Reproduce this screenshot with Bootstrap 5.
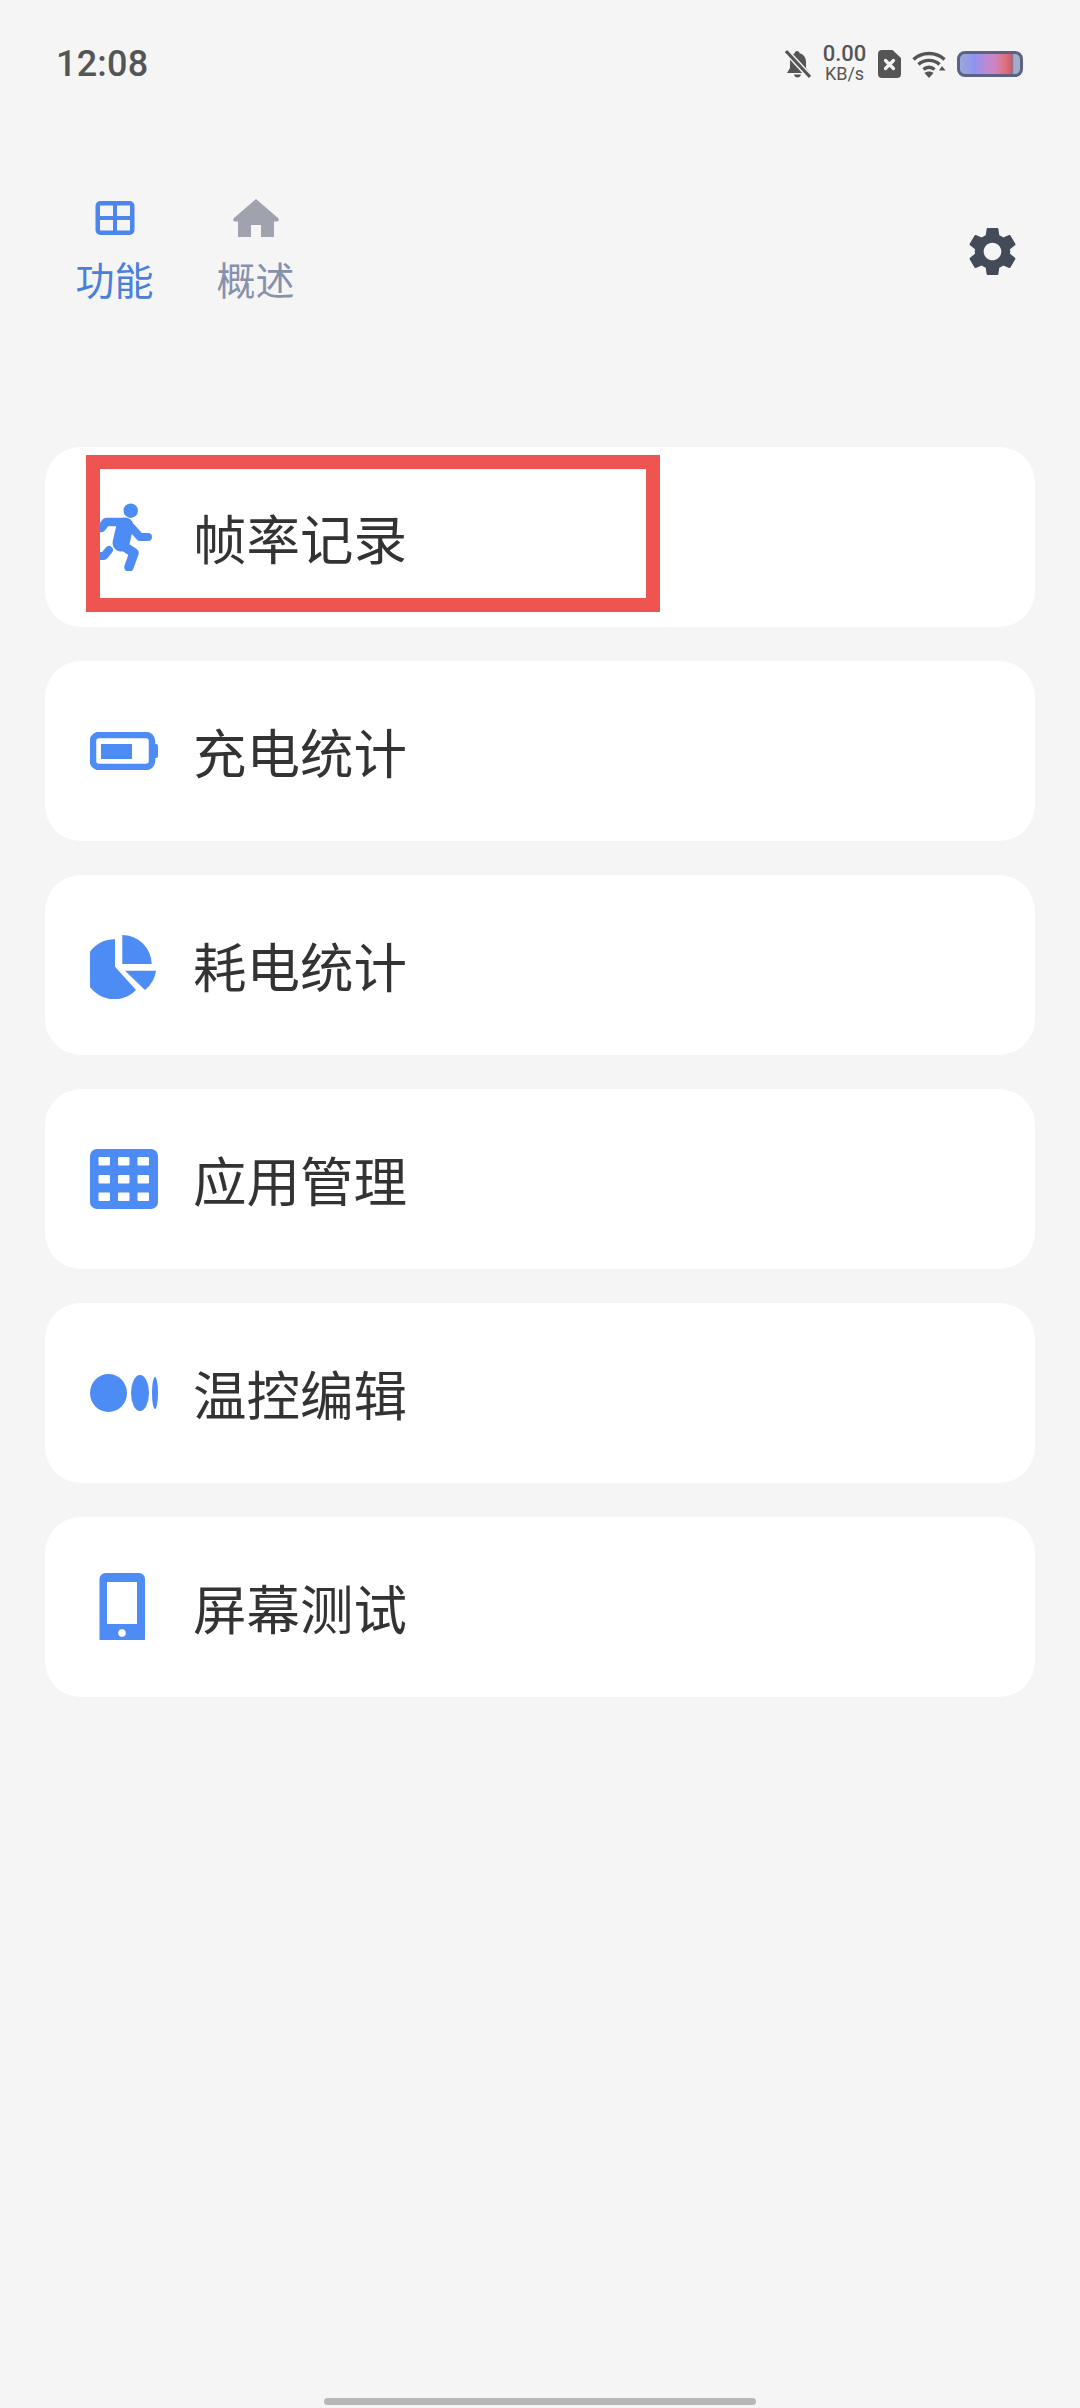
<!DOCTYPE html>
<html lang="zh-CN">
<head>
<meta charset="utf-8">
<title>功能</title>
<link href="https://cdn.jsdelivr.net/npm/bootstrap@5.3.0/dist/css/bootstrap.min.css" rel="stylesheet">
<style>
html, body { background: #f5f5f6; }
body { font-family: "Noto Sans CJK SC", "Noto Sans", sans-serif; }
svg { display: block; flex: none; }
.page-shell { min-height: 2408px; overflow: hidden; }
.status-row { padding: 44px 57px 0 56px; height: 84px; color: #555; }
.clock { font-family: Roboto, sans-serif; font-weight: 500; font-size: 36px; line-height: 40px; letter-spacing: .2px; }
.status-icons { gap: 11px; }
.speed { font-family: Roboto, sans-serif; font-weight: 500; width: 45px; margin-top: -3px; }
.speed-num { font-size: 22px; line-height: 22px; }
.speed-unit { font-size: 18px; line-height: 18px; font-weight: 400; }
.batt-pill { width: 66px; height: 26px; border: 3px solid #5b6283; border-radius: 8px; background: linear-gradient(90deg, #9aa9dd 0%, #8f93ee 24%, #b98bd6 42%, #cc85c4 58%, #e0727f 74%, #d0606e 84%, #8f6f88 87%, #a5adc6 90%, #a5adc6 100%); }
.tabs-row { margin-top: 115px; padding: 0 58px 0 76px; }
.tab-group { gap: 64px; }
.tab-item { width: 77px; }
.tab-icon { height: 38px; }
.tab-label { margin-top: 21px; font-size: 39px; line-height: 40px; white-space: nowrap; }
.tab-on { color: #4a80dc; }
.tab-off { color: #8791ad; }
.gear-wrap { margin-top: 5px; }
.feature-list { margin: 149px 45px 0 45px; gap: 34px; }
.feature-card { height: 180px; border-radius: 36px; padding-left: 45px; background: #fff; }
.feature-glyph { width: 68px; }
.feature-name { margin-left: 35px; font-size: 53.5px; line-height: 60px; color: #333; }
.note-box { left: 41px; top: 8px; width: 574px; height: 157px; border: 14px solid #ef5550; }
.home-bar { width: 432px; height: 7px; border-radius: 4px; background: #b7b7b7; margin-bottom: 3px; }
</style>
</head>
<body>
<div class="page-shell d-flex flex-column">

  <div class="status-row d-flex justify-content-between align-items-center">
    <div class="clock">12:08</div>
    <div class="status-icons d-flex align-items-center">
      <svg width="26" height="28" viewBox="0 0 26 28"><path fill="#555" d="M12 1c1.500 0 2.500 1 2.600 2.300C19 4.400 21 8 21 12v6l4 5H2l3-5v-6c0-4 2.500-7.600 4.600-8.700C9.700 2 10.600 1 12 1zM9 24.500h7c-.4 1.800-1.800 3-3.500 3S9.400 26.300 9 24.500z"/><path d="M1 1l24 26" stroke="#f5f5f6" stroke-width="6"/><path d="M1 1l24 26" stroke="#555" stroke-width="3"/></svg>
      <div class="speed text-center">
        <div class="speed-num">0.00</div>
        <div class="speed-unit">KB/s</div>
      </div>
      <svg width="23" height="28" viewBox="0 0 23 28"><path fill="#555" d="M4 0h10.500L23 8v16a4 4 0 0 1-4 4H4a4 4 0 0 1-4-4V4a4 4 0 0 1 4-4z"/><path d="M7.500 10.500l8 8M15.500 10.500l-8 8" stroke="#f5f5f6" stroke-width="3.200" stroke-linecap="round"/></svg>
      <svg width="34" height="27" viewBox="0 0 34 27" fill="none" stroke="#555" stroke-width="3.400"><path d="M1.500 8.500C9.500 .5 24.500 .5 32.500 8.500"/><path d="M6.500 13.500C12 8 22 8 27.500 13.500"/><path d="M11.500 18.500C14.500 15.500 19.500 15.500 22.500 18.500"/><path fill="#555" stroke="none" d="M17 27l-4.500-5c2.500-2 6.500-2 9 0z"/><path fill="#555" stroke="none" d="M27 19.500l3-4.500 3.500 4.500z"/></svg>
      <div class="batt-pill"></div>
    </div>
  </div>

  <div class="tabs-row d-flex justify-content-between align-items-center">
    <div class="tab-group d-flex">
      <div class="tab-item d-flex flex-column align-items-center">
        <svg class="tab-icon" width="40" height="38" viewBox="0 0 40 38"><rect x="0.500" y="2" width="39" height="34" rx="5" fill="#4d85ee"/><g fill="#f5f5f6"><rect x="5" y="6.500" width="13" height="10.500"/><rect x="22" y="6.500" width="13" height="10.500"/><rect x="5" y="21" width="13" height="10.500"/><rect x="22" y="21" width="13" height="10.500"/></g></svg>
        <div class="tab-label tab-on">功能</div>
      </div>
      <div class="tab-item d-flex flex-column align-items-center">
        <svg class="tab-icon" width="46" height="38" viewBox="0 0 46 38"><path fill="#a0a3ad" d="M23 0l22 19c1.500 1.500.8 3.500-1 3.500h-3V38H28V26H18v12H5V22.500H2c-1.800 0-2.500-2-1-3.500z"/></svg>
        <div class="tab-label tab-off">概述</div>
      </div>
    </div>
    <div class="gear-wrap">
      <svg width="59" height="59" viewBox="0 0 24 24"><path fill="#434b58" d="M19.140 12.940c.04-.3.06-.61.06-.94 0-.32-.02-.64-.07-.94l2.030-1.580a.49.49 0 0 0 .12-.61l-1.920-3.320a.488.488 0 0 0-.59-.22l-2.390.96c-.5-.38-1.030-.7-1.620-.94l-.36-2.540a.484.484 0 0 0-.48-.41h-3.840c-.24 0-.43.17-.47.41l-.36 2.540c-.59.24-1.130.57-1.620.94l-2.390-.96c-.22-.08-.47 0-.59.22L2.740 8.870c-.12.21-.08.47.12.61l2.030 1.580c-.05.3-.09.63-.09.94s.02.64.07.94l-2.030 1.580a.49.49 0 0 0-.12.61l1.920 3.320c.12.22.37.29.59.22l2.390-.96c.5.38 1.030.7 1.620.94l.36 2.540c.05.24.24.41.48.41h3.840c.24 0 .44-.17.47-.41l.36-2.540c.59-.24 1.130-.56 1.620-.94l2.390.96c.22.08.47 0 .59-.22l1.920-3.320c.12-.22.07-.47-.12-.61l-2.010-1.580zM12 15.600c-1.980 0-3.600-1.620-3.600-3.600s1.620-3.600 3.600-3.600 3.600 1.620 3.600 3.600-1.620 3.600-3.600 3.600z"/></svg>
    </div>
  </div>

  <div class="feature-list d-flex flex-column">
    <div class="card border-0 feature-card flex-row align-items-center position-relative">
      <svg class="feature-glyph" width="68" height="68" viewBox="0 0 68 68" fill="none" stroke="#4d8bf5" stroke-linecap="round" stroke-linejoin="round">
        <circle cx="40.700" cy="7.700" r="7.200" fill="#4d8bf5" stroke="none"/>
        <path d="M35 23L31 40" stroke-width="17"/>
        <path d="M32 19H16L11.500 25" stroke-width="8.500"/>
        <path d="M41 24L50 34H58" stroke-width="8"/>
        <path d="M29 40L44 50L39 64" stroke-width="9.500"/>
        <path d="M0 53H14L19 47" stroke-width="8"/>
      </svg>
      <div class="feature-name">帧率记录</div>
      <div class="note-box position-absolute"></div>
    </div>
    <div class="card border-0 feature-card flex-row align-items-center">
      <svg class="feature-glyph" width="68" height="38" viewBox="0 0 68 38"><rect x="3" y="3" width="59" height="32" rx="6" fill="none" stroke="#4d8bf5" stroke-width="6.500"/><rect x="11" y="12" width="31" height="15" fill="#4d8bf5"/><path d="M65 12h1a2 2 0 0 1 2 2v10a2 2 0 0 1-2 2h-1z" fill="#4d8bf5"/></svg>
      <div class="feature-name">充电统计</div>
    </div>
    <div class="card border-0 feature-card flex-row align-items-center">
      <svg class="feature-glyph" width="68" height="68" viewBox="0 0 68 68" fill="#4d8bf5"><path d="M25 8.300V35.700L46 59A30 30 0 1 1 25 8.300z"/><path d="M32.300 4A29.500 29.500 0 0 1 61.700 33H32.300z"/><path d="M35 39.700H66A30 30 0 0 1 55 59z"/></svg>
      <div class="feature-name">耗电统计</div>
    </div>
    <div class="card border-0 feature-card flex-row align-items-center">
      <svg class="feature-glyph" width="68" height="60" viewBox="0 0 68 60"><rect width="68" height="60" rx="7" fill="#4d8bf5"/><g fill="#fff"><rect x="8.500" y="8" width="11.500" height="8.500" rx="1"/><rect x="28" y="8" width="11.500" height="8.500" rx="1"/><rect x="47.500" y="8" width="11.500" height="8.500" rx="1"/><rect x="8.500" y="26" width="11.500" height="8.500" rx="1"/><rect x="28" y="26" width="11.500" height="8.500" rx="1"/><rect x="47.500" y="26" width="11.500" height="8.500" rx="1"/><rect x="8.500" y="43.500" width="11.500" height="8.500" rx="1"/><rect x="28" y="43.500" width="11.500" height="8.500" rx="1"/><rect x="47.500" y="43.500" width="11.500" height="8.500" rx="1"/></g></svg>
      <div class="feature-name">应用管理</div>
    </div>
    <div class="card border-0 feature-card flex-row align-items-center">
      <svg class="feature-glyph" width="68" height="40" viewBox="0 0 68 40" fill="#4d8bf5"><ellipse cx="18.500" cy="20" rx="18.500" ry="19"/><ellipse cx="50" cy="20" rx="9" ry="18"/><ellipse cx="65" cy="20" rx="3" ry="16"/></svg>
      <div class="feature-name">温控编辑</div>
    </div>
    <div class="card border-0 feature-card flex-row align-items-center">
      <svg class="feature-glyph" width="68" height="68" viewBox="0 0 68 68"><path fill="#4d8bf5" d="M15.500 0H49a6 6 0 0 1 6 6V67H9.500V6a6 6 0 0 1 6-6z"/><rect x="17" y="9" width="30" height="42" fill="#fff"/><circle cx="32" cy="60" r="3.800" fill="#fff"/></svg>
      <div class="feature-name">屏幕测试</div>
    </div>
  </div>

  <div class="home-bar mt-auto mx-auto"></div>
</div>
<script src="https://cdn.jsdelivr.net/npm/bootstrap@5.3.0/dist/js/bootstrap.bundle.min.js"></script>
</body>
</html>
